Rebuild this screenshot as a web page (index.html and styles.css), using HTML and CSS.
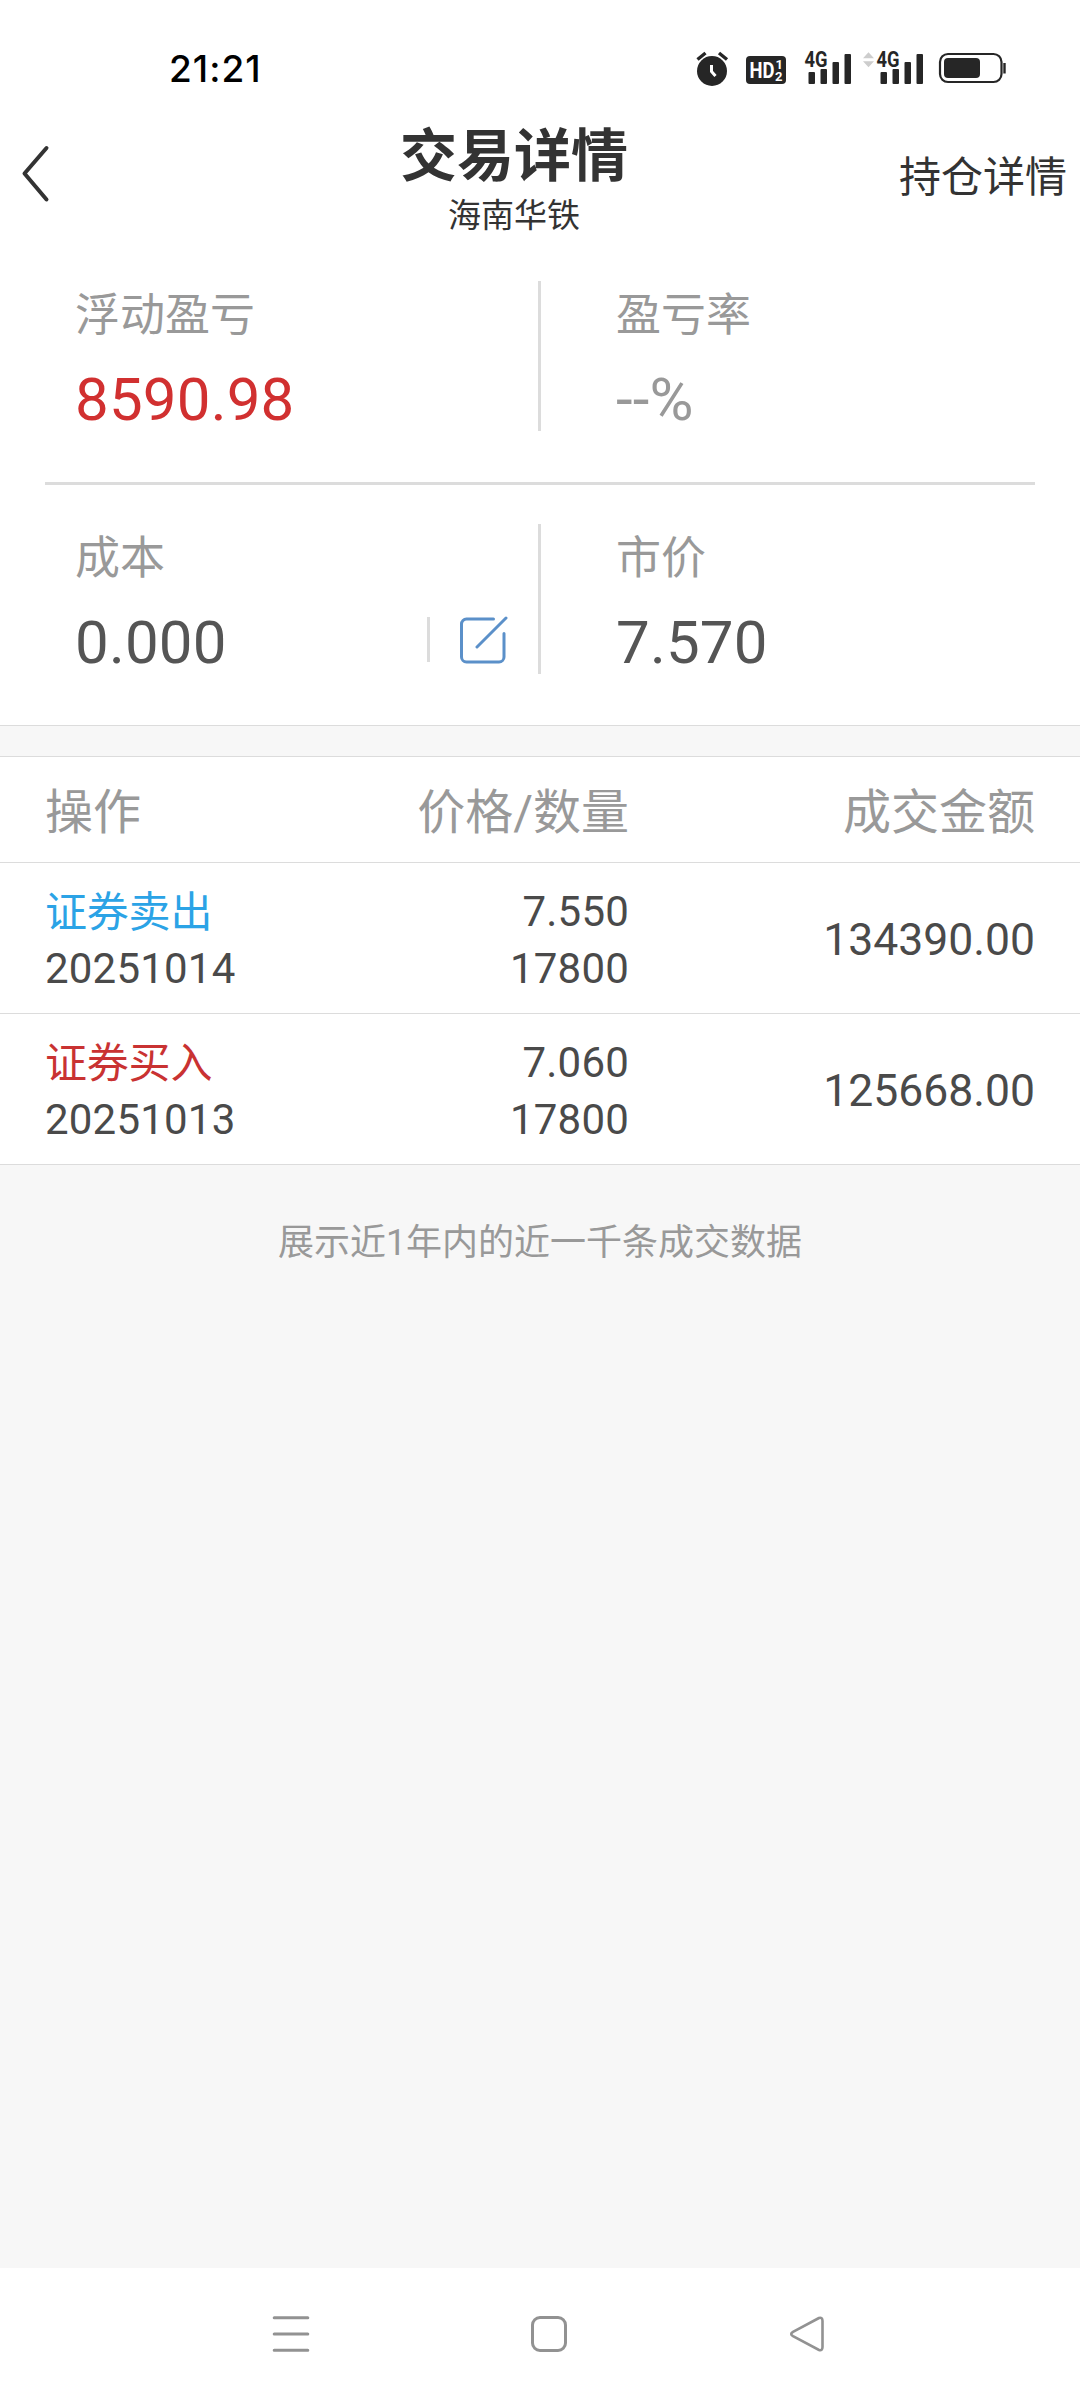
FILE: index.html
```html
<!DOCTYPE html>
<html lang="zh-CN">
<head>
    <meta charset="UTF-8">
    <meta name="viewport" content="width=device-width, initial-scale=1.0">
    <title>交易详情</title>
    <link rel="stylesheet" href="styles.css">
</head>
<body>
    <div class="status-bar">
        <div class="status-time">21:21</div>
        <svg class="status-icons" width="320" height="44" viewBox="690 46 320 44">
            <!-- 闹钟 -->
            <g stroke="#262626" stroke-width="3.4" fill="none">
                <path d="M697.5 59.5l8-6.5M727 59.5l-8-6.5"/>
                <circle cx="712" cy="71" r="15" fill="#262626" stroke="none"/>
                <path d="M711.5 65v6.5l4 4.5" stroke="#fff" stroke-width="3"/>
            </g>
            <!-- HD -->
            <rect x="746" y="56" width="40" height="28" rx="4" fill="#262626"/>
            <g class="badge-text">
                <text x="749.5" y="77.5" font-size="22" textLength="25" lengthAdjust="spacingAndGlyphs">HD</text>
                <text x="775.5" y="69" font-size="13">1</text>
                <text x="775" y="81" font-size="13">2</text>
            </g>
            <!-- 信号 -->
            <g id="signal" fill="#262626">
                <rect x="808.5" y="72" width="6.5" height="12" rx="1"/>
                <rect x="820.5" y="69" width="6.5" height="15" rx="1"/>
                <rect x="832.5" y="62" width="6.5" height="22" rx="1"/>
                <rect x="844.5" y="54" width="6.5" height="30" rx="1"/>
                <text class="net-text" x="804.5" y="67.3" textLength="23" lengthAdjust="spacingAndGlyphs">4G</text>
            </g>
            <use href="#signal" x="72"/>
            <path d="M863 58.2l5.5-6 5.5 6zM863 61.2l5.5 6 5.5-6z" fill="#cdcdcd"/>
            <!-- 电池 -->
            <rect x="940" y="54" width="61.5" height="28" rx="8" fill="none" stroke="#262626" stroke-width="2.2"/>
            <rect x="944" y="58" width="36" height="20" rx="4" fill="#262626"/>
            <path d="M1004.5 63v10.5" stroke="#262626" stroke-width="2.4"/>
        </svg>
    </div>

    <div class="header">
        <button class="back-button">
            <svg width="30" height="60" viewBox="0 0 30 60">
                <path d="M26.5 4L4.5 29.5l22 26" fill="none" stroke="#333" stroke-width="4" stroke-linecap="round" stroke-linejoin="round"/>
            </svg>
        </button>
        <div class="header-center">
            <div class="header-title">交易详情</div>
            <div class="header-sub">海南华铁</div>
        </div>
        <div class="header-link">持仓详情</div>
    </div>

    <div class="summary">
        <div class="summary-row">
            <div class="summary-cell">
                <div class="label">浮动盈亏</div>
                <div class="value red">8590.98</div>
            </div>
            <div class="summary-cell">
                <div class="label">盈亏率</div>
                <div class="value gray">--%</div>
            </div>
        </div>
        <div class="summary-row">
            <div class="summary-cell">
                <div class="label">成本</div>
                <div class="value-line">
                    <div class="value">0.000</div>
                    <div class="edit">
                        <svg width="50" height="50" viewBox="0 0 50 50">
                            <path d="M35.5 5H8.5a5 5 0 0 0-5 5v33a5 5 0 0 0 5 5h32.5a5 5 0 0 0 5-5V19.5M19 33L48 4" fill="none" stroke="#5b90c9" stroke-width="3" stroke-linecap="round"/>
                        </svg>
                    </div>
                </div>
            </div>
            <div class="summary-cell">
                <div class="label">市价</div>
                <div class="value">7.570</div>
            </div>
        </div>
    </div>

    <div class="trades">
        <div class="trade-head">
            <div class="col-op">操作</div>
            <div class="col-price">价格/数量</div>
            <div class="col-amount">成交金额</div>
        </div>
        <div class="trade-row">
            <div class="col-op">
                <div class="sell">证券卖出</div>
                <div>20251014</div>
            </div>
            <div class="col-price">
                <div>7.550</div>
                <div>17800</div>
            </div>
            <div class="col-amount">134390.00</div>
        </div>
        <div class="trade-row">
            <div class="col-op">
                <div class="buy">证券买入</div>
                <div>20251013</div>
            </div>
            <div class="col-price">
                <div>7.060</div>
                <div>17800</div>
            </div>
            <div class="col-amount">125668.00</div>
        </div>
    </div>

    <div class="tip">展示近1年内的近一千条成交数据</div>

    <div class="nav-bar">
        <svg width="40" height="40" viewBox="0 0 40 40">
            <path d="M3.2 3.7h33.6M3.2 20h33.6M3.2 36.3h33.6"/>
        </svg>
        <svg width="40" height="40" viewBox="0 0 40 40">
            <rect x="3.5" y="3.5" width="33" height="33" rx="7.5"/>
        </svg>
        <svg width="40" height="40" viewBox="0 0 40 40">
            <path d="M32 4L6 17.8Q2.4 20 6 22.2L32 36Q35.5 37 35.5 33V7Q35.5 3 32 4z" stroke-width="2.6"/>
        </svg>
    </div>
</body>
</html>
```
FILE: styles.css
```css
* {
    box-sizing: border-box;
}

body {
    margin: 0;
    min-height: 2400px;
    display: flex;
    flex-direction: column;
    background: #f7f7f7;
    color: #4a4a4a;
    font-family: Roboto, "Noto Sans CJK SC", sans-serif;
}

.status-bar {
    height: 90px;
    padding: 46px 70px 0 169px;
    display: flex;
    justify-content: space-between;
    background: #fff;
}

.status-time {
    font-family: Inter, sans-serif;
    font-size: 37px;
    font-weight: 500;
    line-height: 45px;
    letter-spacing: 1px;
    color: #000;
}

.status-icons {
    font-family: Roboto, sans-serif;
    font-weight: 700;
}

.badge-text {
    fill: #fff;
}

.net-text {
    font-size: 21.5px;
}

.header {
    height: 152px;
    display: grid;
    grid-template-columns: 400px 228px 1fr;
    background: #fff;
    color: #333;
}

.back-button {
    justify-self: start;
    align-self: start;
    margin: 54px 0 0 20px;
    padding: 0;
    border: none;
    background: none;
    height: 60px;
}

.header-center {
    padding-top: 38px;
    text-align: center;
}

.header-title {
    font-size: 57px;
    font-weight: 700;
    line-height: 58px;
}

.header-sub {
    margin-top: 13px;
    font-size: 33px;
    line-height: 34px;
}

.header-link {
    justify-self: end;
    padding: 63px 13px 0 0;
    font-size: 42px;
    line-height: 50px;
}

.summary {
    padding: 0 45px;
    background: #fff;
    border-bottom: 1px solid #dcdcdc;
}

.summary-row {
    display: flex;
    padding: 39px 0 51px;
}

.summary-row + .summary-row {
    border-top: 3px solid #dcdcdc;
}

.summary-cell {
    flex: 1;
    height: 150px;
    padding: 11px 30px 0;
}

.summary-cell:first-child {
    flex: none;
    width: 496px;
    border-right: 3px solid #dcdcdc;
}

.summary-cell:last-child {
    padding-left: 75px;
}

.label {
    font-size: 45px;
    line-height: 48px;
    color: #999;
}

.value {
    margin-top: 29px;
    font-size: 60px;
    line-height: 61px;
    letter-spacing: 0.2px;
    color: #555;
}

.value.red {
    color: #d13030;
}

.value.gray {
    color: #999;
}

.value-line {
    display: flex;
    justify-content: space-between;
}

.edit {
    height: 45px;
    margin-top: 34px;
    padding-left: 28px;
    border-left: 3px solid #dcdcdc;
}

.edit svg {
    display: block;
    margin-top: -3px;
}

.trades {
    margin-top: 30px;
    border-top: 1px solid #dcdcdc;
    background: #fff;
}

.trade-head,
.trade-row {
    display: flex;
    padding: 0 45px;
    border-bottom: 1px solid #dcdcdc;
}

.trade-head {
    height: 106px;
    padding-top: 31px;
    font-size: 48px;
    line-height: 50px;
    color: #999;
}

.trade-row {
    height: 151px;
    padding-top: 20px;
    font-size: 42px;
    line-height: 57px;
    letter-spacing: 0.2px;
}

.col-op {
    width: 285px;
}

.col-price {
    width: 299px;
    text-align: right;
}

.col-amount {
    flex: 1;
    text-align: right;
}

.trade-row .col-amount {
    font-size: 44.5px;
    line-height: 114px;
    letter-spacing: 0;
}

.sell,
.buy {
    margin: 1px 0 -1px;
    letter-spacing: -0.2px;
}

.sell {
    color: #2ba3e6;
}

.buy {
    color: #c93232;
}

.tip {
    padding-top: 60px;
    text-align: center;
    font-size: 36px;
    line-height: 36px;
    color: #999;
}

.nav-bar {
    height: 132px;
    margin-top: auto;
    padding: 46px 253px 0 271px;
    display: flex;
    justify-content: space-between;
    background: #fff;
}

.nav-bar svg {
    fill: none;
    stroke: #929292;
    stroke-width: 3;
    stroke-linecap: round;
}
```
